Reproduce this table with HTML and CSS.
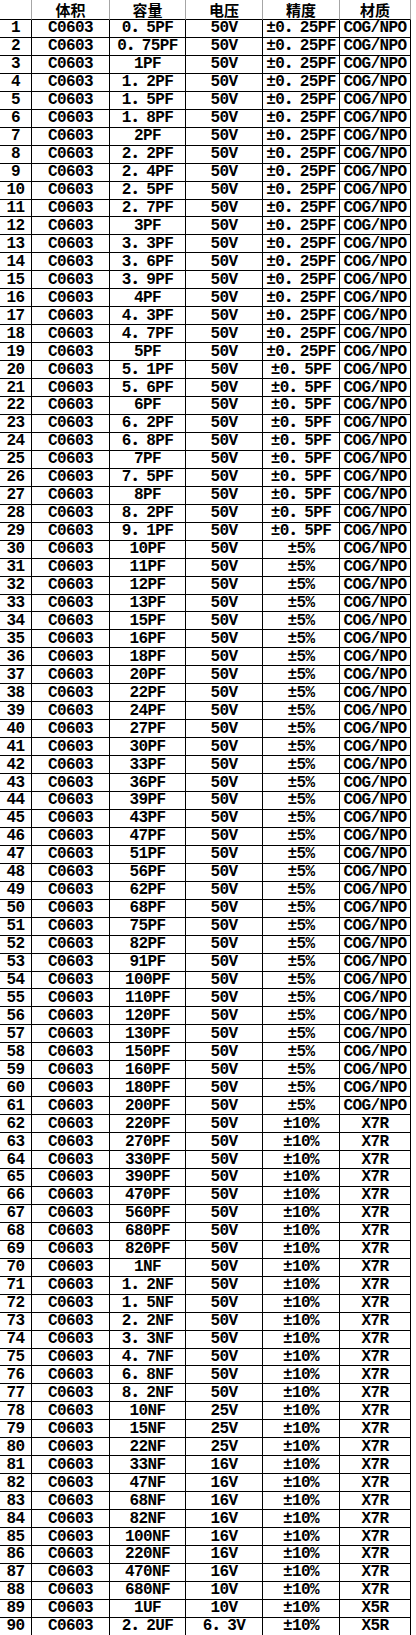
FILE: index.html
```html
<!DOCTYPE html>
<html lang="zh">
<head>
<meta charset="utf-8">
<title>C0603 电容规格表</title>
<link rel="stylesheet" href="styles.css">
</head>
<body>
<div class="sheet">
<div class="h"></div><div class="h">体积</div><div class="h">容量</div><div class="h">电压</div><div class="h">精度</div><div class="h">材质</div>
<div>1</div><div>C0603</div><div>0．5PF</div><div>50V</div><div>±0．25PF</div><div>COG/NPO</div>
<div>2</div><div>C0603</div><div>0．75PF</div><div>50V</div><div>±0．25PF</div><div>COG/NPO</div>
<div>3</div><div>C0603</div><div>1PF</div><div>50V</div><div>±0．25PF</div><div>COG/NPO</div>
<div>4</div><div>C0603</div><div>1．2PF</div><div>50V</div><div>±0．25PF</div><div>COG/NPO</div>
<div>5</div><div>C0603</div><div>1．5PF</div><div>50V</div><div>±0．25PF</div><div>COG/NPO</div>
<div>6</div><div>C0603</div><div>1．8PF</div><div>50V</div><div>±0．25PF</div><div>COG/NPO</div>
<div>7</div><div>C0603</div><div>2PF</div><div>50V</div><div>±0．25PF</div><div>COG/NPO</div>
<div>8</div><div>C0603</div><div>2．2PF</div><div>50V</div><div>±0．25PF</div><div>COG/NPO</div>
<div>9</div><div>C0603</div><div>2．4PF</div><div>50V</div><div>±0．25PF</div><div>COG/NPO</div>
<div>10</div><div>C0603</div><div>2．5PF</div><div>50V</div><div>±0．25PF</div><div>COG/NPO</div>
<div>11</div><div>C0603</div><div>2．7PF</div><div>50V</div><div>±0．25PF</div><div>COG/NPO</div>
<div>12</div><div>C0603</div><div>3PF</div><div>50V</div><div>±0．25PF</div><div>COG/NPO</div>
<div>13</div><div>C0603</div><div>3．3PF</div><div>50V</div><div>±0．25PF</div><div>COG/NPO</div>
<div>14</div><div>C0603</div><div>3．6PF</div><div>50V</div><div>±0．25PF</div><div>COG/NPO</div>
<div>15</div><div>C0603</div><div>3．9PF</div><div>50V</div><div>±0．25PF</div><div>COG/NPO</div>
<div>16</div><div>C0603</div><div>4PF</div><div>50V</div><div>±0．25PF</div><div>COG/NPO</div>
<div>17</div><div>C0603</div><div>4．3PF</div><div>50V</div><div>±0．25PF</div><div>COG/NPO</div>
<div>18</div><div>C0603</div><div>4．7PF</div><div>50V</div><div>±0．25PF</div><div>COG/NPO</div>
<div>19</div><div>C0603</div><div>5PF</div><div>50V</div><div>±0．25PF</div><div>COG/NPO</div>
<div>20</div><div>C0603</div><div>5．1PF</div><div>50V</div><div>±0．5PF</div><div>COG/NPO</div>
<div>21</div><div>C0603</div><div>5．6PF</div><div>50V</div><div>±0．5PF</div><div>COG/NPO</div>
<div>22</div><div>C0603</div><div>6PF</div><div>50V</div><div>±0．5PF</div><div>COG/NPO</div>
<div>23</div><div>C0603</div><div>6．2PF</div><div>50V</div><div>±0．5PF</div><div>COG/NPO</div>
<div>24</div><div>C0603</div><div>6．8PF</div><div>50V</div><div>±0．5PF</div><div>COG/NPO</div>
<div>25</div><div>C0603</div><div>7PF</div><div>50V</div><div>±0．5PF</div><div>COG/NPO</div>
<div>26</div><div>C0603</div><div>7．5PF</div><div>50V</div><div>±0．5PF</div><div>COG/NPO</div>
<div>27</div><div>C0603</div><div>8PF</div><div>50V</div><div>±0．5PF</div><div>COG/NPO</div>
<div>28</div><div>C0603</div><div>8．2PF</div><div>50V</div><div>±0．5PF</div><div>COG/NPO</div>
<div>29</div><div>C0603</div><div>9．1PF</div><div>50V</div><div>±0．5PF</div><div>COG/NPO</div>
<div>30</div><div>C0603</div><div>10PF</div><div>50V</div><div>±5%</div><div>COG/NPO</div>
<div>31</div><div>C0603</div><div>11PF</div><div>50V</div><div>±5%</div><div>COG/NPO</div>
<div>32</div><div>C0603</div><div>12PF</div><div>50V</div><div>±5%</div><div>COG/NPO</div>
<div>33</div><div>C0603</div><div>13PF</div><div>50V</div><div>±5%</div><div>COG/NPO</div>
<div>34</div><div>C0603</div><div>15PF</div><div>50V</div><div>±5%</div><div>COG/NPO</div>
<div>35</div><div>C0603</div><div>16PF</div><div>50V</div><div>±5%</div><div>COG/NPO</div>
<div>36</div><div>C0603</div><div>18PF</div><div>50V</div><div>±5%</div><div>COG/NPO</div>
<div>37</div><div>C0603</div><div>20PF</div><div>50V</div><div>±5%</div><div>COG/NPO</div>
<div>38</div><div>C0603</div><div>22PF</div><div>50V</div><div>±5%</div><div>COG/NPO</div>
<div>39</div><div>C0603</div><div>24PF</div><div>50V</div><div>±5%</div><div>COG/NPO</div>
<div>40</div><div>C0603</div><div>27PF</div><div>50V</div><div>±5%</div><div>COG/NPO</div>
<div>41</div><div>C0603</div><div>30PF</div><div>50V</div><div>±5%</div><div>COG/NPO</div>
<div>42</div><div>C0603</div><div>33PF</div><div>50V</div><div>±5%</div><div>COG/NPO</div>
<div>43</div><div>C0603</div><div>36PF</div><div>50V</div><div>±5%</div><div>COG/NPO</div>
<div>44</div><div>C0603</div><div>39PF</div><div>50V</div><div>±5%</div><div>COG/NPO</div>
<div>45</div><div>C0603</div><div>43PF</div><div>50V</div><div>±5%</div><div>COG/NPO</div>
<div>46</div><div>C0603</div><div>47PF</div><div>50V</div><div>±5%</div><div>COG/NPO</div>
<div>47</div><div>C0603</div><div>51PF</div><div>50V</div><div>±5%</div><div>COG/NPO</div>
<div>48</div><div>C0603</div><div>56PF</div><div>50V</div><div>±5%</div><div>COG/NPO</div>
<div>49</div><div>C0603</div><div>62PF</div><div>50V</div><div>±5%</div><div>COG/NPO</div>
<div>50</div><div>C0603</div><div>68PF</div><div>50V</div><div>±5%</div><div>COG/NPO</div>
<div>51</div><div>C0603</div><div>75PF</div><div>50V</div><div>±5%</div><div>COG/NPO</div>
<div>52</div><div>C0603</div><div>82PF</div><div>50V</div><div>±5%</div><div>COG/NPO</div>
<div>53</div><div>C0603</div><div>91PF</div><div>50V</div><div>±5%</div><div>COG/NPO</div>
<div>54</div><div>C0603</div><div>100PF</div><div>50V</div><div>±5%</div><div>COG/NPO</div>
<div>55</div><div>C0603</div><div>110PF</div><div>50V</div><div>±5%</div><div>COG/NPO</div>
<div>56</div><div>C0603</div><div>120PF</div><div>50V</div><div>±5%</div><div>COG/NPO</div>
<div>57</div><div>C0603</div><div>130PF</div><div>50V</div><div>±5%</div><div>COG/NPO</div>
<div>58</div><div>C0603</div><div>150PF</div><div>50V</div><div>±5%</div><div>COG/NPO</div>
<div>59</div><div>C0603</div><div>160PF</div><div>50V</div><div>±5%</div><div>COG/NPO</div>
<div>60</div><div>C0603</div><div>180PF</div><div>50V</div><div>±5%</div><div>COG/NPO</div>
<div>61</div><div>C0603</div><div>200PF</div><div>50V</div><div>±5%</div><div>COG/NPO</div>
<div>62</div><div>C0603</div><div>220PF</div><div>50V</div><div>±10%</div><div>X7R</div>
<div>63</div><div>C0603</div><div>270PF</div><div>50V</div><div>±10%</div><div>X7R</div>
<div>64</div><div>C0603</div><div>330PF</div><div>50V</div><div>±10%</div><div>X7R</div>
<div>65</div><div>C0603</div><div>390PF</div><div>50V</div><div>±10%</div><div>X7R</div>
<div>66</div><div>C0603</div><div>470PF</div><div>50V</div><div>±10%</div><div>X7R</div>
<div>67</div><div>C0603</div><div>560PF</div><div>50V</div><div>±10%</div><div>X7R</div>
<div>68</div><div>C0603</div><div>680PF</div><div>50V</div><div>±10%</div><div>X7R</div>
<div>69</div><div>C0603</div><div>820PF</div><div>50V</div><div>±10%</div><div>X7R</div>
<div>70</div><div>C0603</div><div>1NF</div><div>50V</div><div>±10%</div><div>X7R</div>
<div>71</div><div>C0603</div><div>1．2NF</div><div>50V</div><div>±10%</div><div>X7R</div>
<div>72</div><div>C0603</div><div>1．5NF</div><div>50V</div><div>±10%</div><div>X7R</div>
<div>73</div><div>C0603</div><div>2．2NF</div><div>50V</div><div>±10%</div><div>X7R</div>
<div>74</div><div>C0603</div><div>3．3NF</div><div>50V</div><div>±10%</div><div>X7R</div>
<div>75</div><div>C0603</div><div>4．7NF</div><div>50V</div><div>±10%</div><div>X7R</div>
<div>76</div><div>C0603</div><div>6．8NF</div><div>50V</div><div>±10%</div><div>X7R</div>
<div>77</div><div>C0603</div><div>8．2NF</div><div>50V</div><div>±10%</div><div>X7R</div>
<div>78</div><div>C0603</div><div>10NF</div><div>25V</div><div>±10%</div><div>X7R</div>
<div>79</div><div>C0603</div><div>15NF</div><div>25V</div><div>±10%</div><div>X7R</div>
<div>80</div><div>C0603</div><div>22NF</div><div>25V</div><div>±10%</div><div>X7R</div>
<div>81</div><div>C0603</div><div>33NF</div><div>16V</div><div>±10%</div><div>X7R</div>
<div>82</div><div>C0603</div><div>47NF</div><div>16V</div><div>±10%</div><div>X7R</div>
<div>83</div><div>C0603</div><div>68NF</div><div>16V</div><div>±10%</div><div>X7R</div>
<div>84</div><div>C0603</div><div>82NF</div><div>16V</div><div>±10%</div><div>X7R</div>
<div>85</div><div>C0603</div><div>100NF</div><div>16V</div><div>±10%</div><div>X7R</div>
<div>86</div><div>C0603</div><div>220NF</div><div>16V</div><div>±10%</div><div>X7R</div>
<div>87</div><div>C0603</div><div>470NF</div><div>16V</div><div>±10%</div><div>X7R</div>
<div>88</div><div>C0603</div><div>680NF</div><div>10V</div><div>±10%</div><div>X7R</div>
<div>89</div><div>C0603</div><div>1UF</div><div>10V</div><div>±10%</div><div>X5R</div>
<div>90</div><div>C0603</div><div>2．2UF</div><div>6．3V</div><div>±10%</div><div>X5R</div>
</div>
</body>
</html>
```

FILE: styles.css
```css
html, body {
  margin: 0;
  padding: 0;
  background: #ffffff;
}

.sheet {
  display: grid;
  grid-template-columns: 32px 78px 76px 77px 77px 71px;
  grid-template-rows: 20px repeat(90, 17.955px);
  width: 411px;
  font-family: "Liberation Mono", "Noto Sans CJK SC", monospace;
  font-weight: bold;
  font-size: 16px;
  letter-spacing: -0.6px;
  color: #000000;
}

.sheet > div {
  box-sizing: border-box;
  display: flex;
  align-items: center;
  justify-content: center;
  border-right: 1px solid #000000;
  border-bottom: 1px solid #000000;
  white-space: nowrap;
  line-height: 1;
  overflow: visible;
}

.sheet > .h {
  border-right-color: #a6a6a6;
  font-family: "Noto Sans CJK SC", sans-serif;
  font-weight: 700;
  font-size: 15px;
  letter-spacing: 0;
  padding-bottom: 1px;
}
```
